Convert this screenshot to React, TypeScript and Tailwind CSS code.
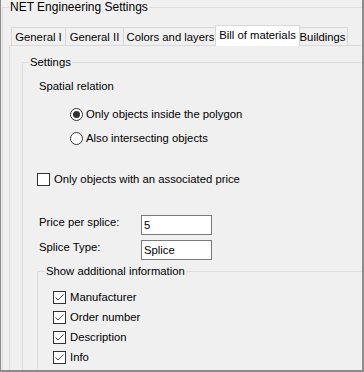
import React from "react";

const tabs = [
  { name: "General I", cls: "w-[55px]" },
  { name: "General II", cls: "w-[59px] -ml-px" },
  { name: "Colors and layers", cls: "w-[95px] -ml-px" },
  { name: "Bill of materials", cls: "w-[85px] -ml-[3px]", active: true },
  { name: "Buildings", cls: "w-[51px] -ml-[3px]" },
];

function Check({ checked }: { checked?: boolean }) {
  return (
    <span className="w-[13px] h-[13px] shrink-0 border border-[#333333] bg-white flex items-center justify-center">
      {checked && (
        <svg width="11" height="11" viewBox="0 0 11 11">
          <polyline points="1.5,5.5 4,8 9.5,2.5" fill="none" stroke="#444444" strokeWidth="1" />
        </svg>
      )}
    </span>
  );
}

function Radio({ checked, label, cls }: { checked?: boolean; label: string; cls: string }) {
  return (
    <div className={`h-[16px] flex items-center gap-[3px] pl-[47px] ${cls}`}>
      <span className="w-[13px] h-[13px] shrink-0 rounded-full border border-[#333333] bg-white flex items-center justify-center">
        {checked && <span className="w-[7px] h-[7px] rounded-full bg-[#333333]" />}
      </span>
      <span>{label}</span>
    </div>
  );
}

export default function App() {
  const extras = ["Manufacturer", "Order number", "Description", "Info"];

  return (
    <div className="w-[364px] h-[372px] overflow-hidden bg-[#f0f0f0] border-l border-r-2 border-b-2 border-[#8c8c8c] text-black text-[11.3px] leading-[14px] whitespace-nowrap font-['Liberation_Sans',Arial,sans-serif]">
      <fieldset className="ml-[1px] w-[360px] overflow-hidden pl-[6px] pb-[80px] border border-[#dcdcdc]">
        <legend className="px-[1px] text-[12px]">NET Engineering Settings</legend>

        {/* Tab strip */}
        <div className="mt-[11px] h-[20px] pl-[2px] flex items-end">
          {tabs.map((t) =>
            t.active ? (
              <div
                key={t.name}
                className={`relative z-10 h-[21px] -mb-px bg-white border border-b-0 border-[#d9d9d9] flex items-center justify-center pb-[2px] ${t.cls}`}
              >
                {t.name}
              </div>
            ) : (
              <div
                key={t.name}
                className={`h-[18px] bg-[#f0f0f0] border border-b-0 border-[#d9d9d9] flex items-center justify-center ${t.cls}`}
              >
                {t.name}
              </div>
            )
          )}
        </div>

        {/* Tab page */}
        <div className="w-[400px] border-t border-l border-[#d9d9d9] bg-[#f0f0f0] pt-[9px] pb-[60px]">
          <fieldset className="ml-[12px] w-[380px] pb-[60px] border border-[#dcdcdc]">
            <legend className="ml-[6px] px-[1px]">Settings</legend>
            <div className="flex flex-col">
              <div className="mt-[10px] h-[14px] pl-[16px]">Spatial relation</div>
              <Radio checked label="Only objects inside the polygon" cls="mt-[13px]" />
              <Radio label="Also intersecting objects" cls="mt-[8px]" />

              <div className="mt-[25px] h-[16px] pl-[14px] flex items-center gap-[4px]">
                <Check />
                <span>Only objects with an associated price</span>
              </div>

              <div className="mt-[28px] h-[20px] pl-[16px] flex items-start">
                <span className="w-[102px]">Price per splice:</span>
                <div className="w-[71px] h-[20px] border border-[#7a7a7a] bg-white pl-[2px] flex items-center">5</div>
              </div>
              <div className="mt-[5px] h-[20px] pl-[16px] flex items-start">
                <span className="w-[102px]">Splice Type:</span>
                <div className="w-[71px] h-[20px] border border-[#7a7a7a] bg-white pl-[2px] flex items-center">Splice</div>
              </div>

              <fieldset className="mt-[4px] ml-[14px] w-[360px] pb-[40px] border border-[#dcdcdc]">
                <legend className="ml-[7px] px-[1px]">Show additional information</legend>
                <div className="flex flex-col gap-[4px] pt-[11px] pl-[15px]">
                  {extras.map((e) => (
                    <div key={e} className="h-[16px] flex items-center gap-[4px]">
                      <Check checked />
                      <span>{e}</span>
                    </div>
                  ))}
                </div>
              </fieldset>
            </div>
          </fieldset>
        </div>
      </fieldset>
    </div>
  );
}
